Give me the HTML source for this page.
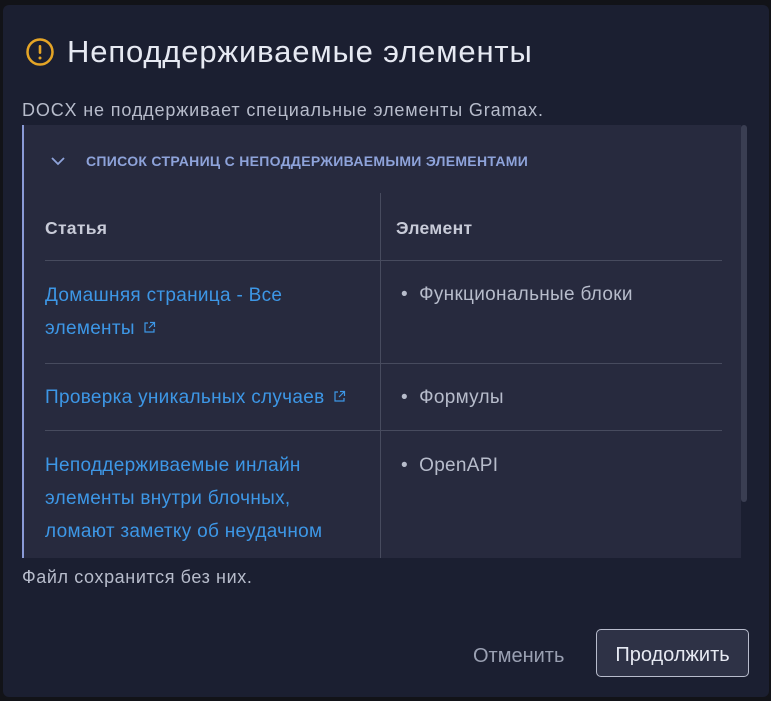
<!DOCTYPE html>
<html><head><meta charset="utf-8"><style>
*{box-sizing:border-box;margin:0;padding:0}
body{width:771px;height:701px;background:#121318;font-family:"Liberation Sans",sans-serif;position:relative;overflow:hidden}
.modal{position:absolute;left:3px;top:5px;width:766px;height:692px;background:#1b1f31;border-radius:6px}
.title{position:absolute;left:22px;top:29px;display:flex;align-items:center;color:#e6e9f2;font-size:31px;letter-spacing:0.85px}
.desc{position:absolute;left:19px;top:95px;color:#b7bccb;font-size:18px;letter-spacing:0.85px}
.box{position:absolute;left:19px;top:120px;width:719px;height:433px;background:#272a3e;border-left:2px solid #8a9ad6;overflow:hidden}
.sum{position:absolute;left:26px;top:28px;color:#8ea3da;font-size:14px;font-weight:bold;display:flex;align-items:center;letter-spacing:0.3px}
.vl{position:absolute;left:356px;top:68px;width:1px;height:400px;background:#474b5e}
.hl{position:absolute;left:21px;width:677px;height:1px;background:#474b5e}
.t{position:absolute;font-size:19px;line-height:33px;letter-spacing:0.3px}
.h{font-weight:bold;color:#c8cbd8;font-size:17.5px}
.a{color:#3d97e6}
.b{color:#b7bccb}
.sb{position:absolute;left:738px;top:120px;width:6px;height:377px;background:#3a3e52;border-radius:3px}
.foot{position:absolute;left:19px;top:562px;color:#b7bccb;font-size:18px;letter-spacing:0.6px}
.cancel{position:absolute;left:470px;top:640px;color:#9aa0b2;font-size:20px}
.btn{position:absolute;left:593px;top:624px;width:153px;height:48px;border:1px solid #b8bccc;border-radius:5px;background:#2e3246;color:#e6e9f2;font-size:20px;text-align:center;line-height:47px;padding-top:2px}
</style></head><body>
<div class="modal">
<div class="title"><svg width="30" height="30" viewBox="0 0 30 30" style="margin-right:12px"><circle cx="15" cy="15" r="12.5" fill="none" stroke="#e5a526" stroke-width="2.5"/><rect x="13.7" y="8" width="2.6" height="9" rx="1.2" fill="#e5a526"/><circle cx="15" cy="21" r="1.5" fill="#e5a526"/></svg>Неподдерживаемые элементы</div>
<div class="desc">DOCX не поддерживает специальные элементы Gramax.</div>
<div class="box">
<div class="sum"><svg width="16" height="10" viewBox="0 0 16 10" style="margin-right:20px"><path d="M2 2l6 6 6-6" fill="none" stroke="#8ea3da" stroke-width="1.8"/></svg>СПИСОК СТРАНИЦ С НЕПОДДЕРЖИВАЕМЫМИ ЭЛЕМЕНТАМИ</div>
<div class="vl"></div>
<div class="t h" style="left:21px;top:87px">Статья</div>
<div class="t h" style="left:372px;top:87px">Элемент</div>
<div class="hl" style="top:135px"></div>
<div class="t a" style="left:21px;top:154px">Домашняя страница - Все<br>элементы <svg width="13" height="13" viewBox="0 0 13 13" style="margin-left:3px"><path d="M5 2H2v9h9V8M7 1.5h4.5V6M11.5 1.5L6 7" fill="none" stroke="#3d97e6" stroke-width="1.2"/></svg></div>
<div class="t b" style="left:377px;top:153px">•&nbsp;&nbsp;Функциональные блоки</div>
<div class="hl" style="top:238px"></div>
<div class="t a" style="left:21px;top:256px">Проверка уникальных случаев <svg width="13" height="13" viewBox="0 0 13 13" style="margin-left:3px"><path d="M5 2H2v9h9V8M7 1.5h4.5V6M11.5 1.5L6 7" fill="none" stroke="#3d97e6" stroke-width="1.2"/></svg></div>
<div class="t b" style="left:377px;top:256px">•&nbsp;&nbsp;Формулы</div>
<div class="hl" style="top:305px"></div>
<div class="t a" style="left:21px;top:324px">Неподдерживаемые инлайн<br>элементы внутри блочных,<br>ломают заметку об неудачном</div>
<div class="t b" style="left:377px;top:324px">•&nbsp;&nbsp;OpenAPI</div>
</div>
<div class="sb"></div>
<div class="foot">Файл сохранится без них.</div>
<div class="cancel">Отменить</div>
<div class="btn">Продолжить</div>
</div>
</body></html>
